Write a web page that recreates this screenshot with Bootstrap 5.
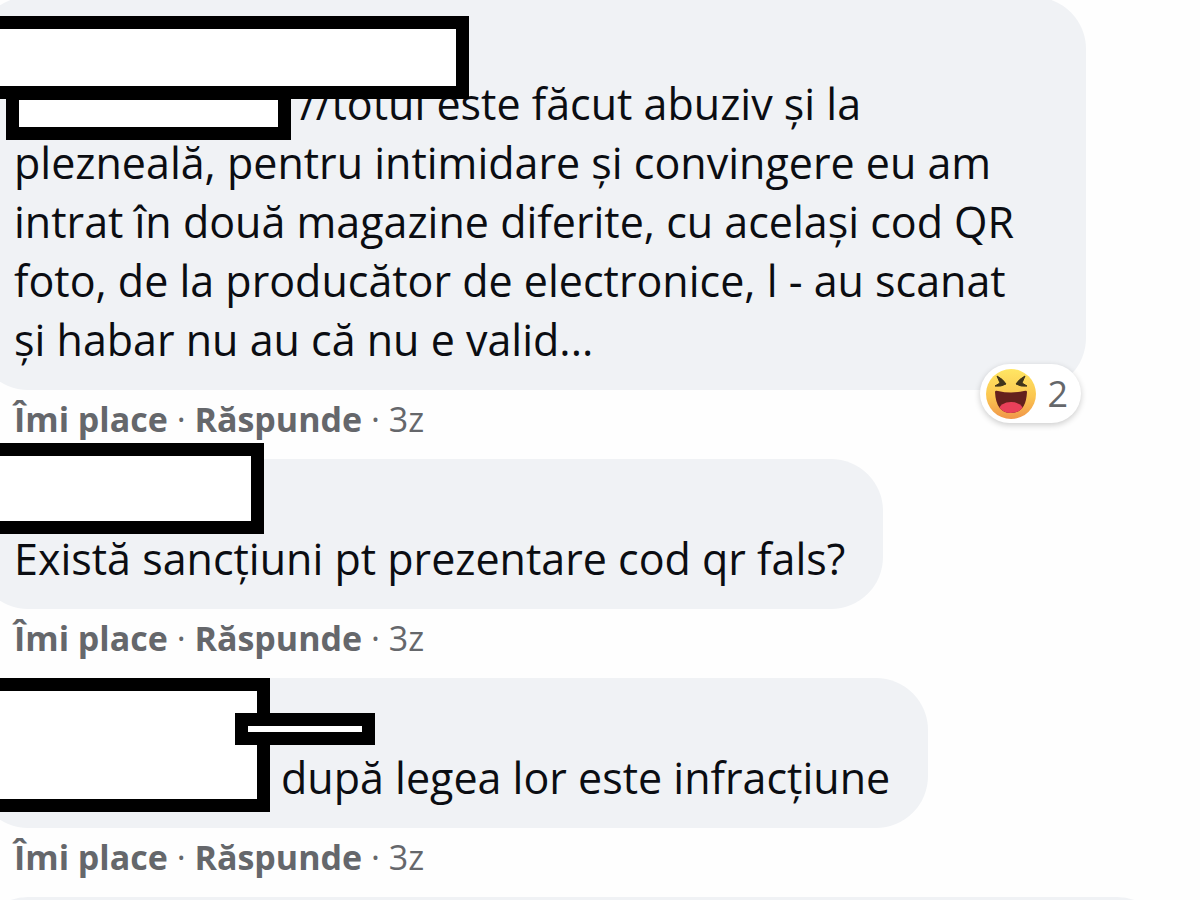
<!DOCTYPE html>
<html lang="ro">
<head>
<meta charset="utf-8">
<meta name="viewport" content="width=device-width, initial-scale=1">
<title>Comentarii</title>
<link href="https://cdn.jsdelivr.net/npm/bootstrap@5.3.0/dist/css/bootstrap.min.css" rel="stylesheet">
<style>
  body { font-family: "Open Sans", "Noto Sans", sans-serif; color: #0b0d12; background: #fefefe; }
  .thread { margin: -3px 0 0 -24px; }
  .bubble { background: #f0f2f5; border-radius: 52px; padding: 19px 38px 21px; width: fit-content; max-width: 100%; }
  .bubble-wide { padding-right: 72px; }
  .author { height: 51px; }
  .author-tall { height: 58px; }
  .message { font-size: 43px; line-height: 59px; white-space: nowrap; }
  .mention { display: inline-block; width: 286px; }
  .mention-short { width: 267px; }
  .actions { height: 69px; padding-left: 38px; font-size: 34px; line-height: 58px; color: #65676b; white-space: pre; }
  .actions button { font-weight: 700; color: #65676b; line-height: 58px; }
  .redact { position: absolute; left: 0; background: #fff; border: 13px solid #000; }
  .r-name1 { top: 19px; width: 493px; height: 83px; }
  .r-mention1 { top: 90px; left: 30px; width: 285px; height: 53px; }
  .r-name2 { top: -16px; width: 288px; height: 91px; }
  .r-name3 { top: 0; width: 294px; height: 134px; }
  .r-mention3 { top: 35px; left: 259px; width: 140px; height: 32px; }
  .reaction { position: absolute; right: 5px; bottom: -33px; height: 59px; padding: 0 13px 0 6px; gap: 12px;
    font-size: 36px; line-height: 59px; color: #65676b; background: #fff; box-shadow: 0 2px 6px rgba(0,0,0,.2); }
  .next { width: 1193px; height: 120px; }
</style>
</head>
<body class="vh-100 overflow-hidden">
<main class="thread">
  <article>
    <div class="bubble bubble-wide position-relative">
      <div class="author author-tall"></div>
      <p class="message m-0"><span class="mention"></span>//totul este făcut abuziv și la<br>plezneală, pentru intimidare și convingere eu am<br>intrat în două magazine diferite, cu același cod QR<br>foto, de la producător de electronice, l - au scanat<br>și habar nu au că nu e valid...</p>
      <span class="redact r-mention1"></span>
      <span class="redact r-name1"></span>
      <div class="reaction d-flex align-items-center rounded-pill">
        <svg width="50" height="50" viewBox="0 0 50 50" aria-hidden="true">
          <defs><linearGradient id="face" x1="0" y1="0" x2="0" y2="1"><stop offset="0" stop-color="#ffe663"/><stop offset=".55" stop-color="#fbc650"/><stop offset="1" stop-color="#f0964a"/></linearGradient>
          <clipPath id="mouth"><path d="M9 23Q9 21 12 22Q25 25 38 22Q41 21 41 23Q40 44 25 44Q10 44 9 23Z"/></clipPath></defs>
          <circle cx="25" cy="25" r="25" fill="url(#face)"/>
          <path d="M9 23Q9 21 12 22Q25 25 38 22Q41 21 41 23Q40 44 25 44Q10 44 9 23Z" fill="#64201d"/>
          <ellipse cx="25" cy="41" rx="12" ry="8" fill="#e9405a" clip-path="url(#mouth)"/>
          <path d="M11 7Q17 10 20 15Q15 18 9 17L14 14ZM39 7Q33 10 30 15Q35 18 41 17L36 14Z" fill="#40341b" stroke="#40341b" stroke-width="1" stroke-linejoin="round"/>
        </svg>
        <span>2</span>
      </div>
    </div>
    <div class="actions"><button type="button" class="border-0 bg-transparent p-0">Îmi place</button> · <button type="button" class="border-0 bg-transparent p-0">Răspunde</button> · 3z</div>
  </article>
  <article>
    <div class="bubble position-relative">
      <div class="author"></div>
      <p class="message m-0">Există sancțiuni pt prezentare cod qr fals?</p>
      <span class="redact r-name2"></span>
    </div>
    <div class="actions"><button type="button" class="border-0 bg-transparent p-0">Îmi place</button> · <button type="button" class="border-0 bg-transparent p-0">Răspunde</button> · 3z</div>
  </article>
  <article>
    <div class="bubble position-relative">
      <div class="author"></div>
      <p class="message m-0"><span class="mention mention-short"></span>după legea lor este infracțiune</p>
      <span class="redact r-name3"></span>
      <span class="redact r-mention3"></span>
    </div>
    <div class="actions"><button type="button" class="border-0 bg-transparent p-0">Îmi place</button> · <button type="button" class="border-0 bg-transparent p-0">Răspunde</button> · 3z</div>
  </article>
  <div class="bubble next"></div>
</main>
<script src="https://cdn.jsdelivr.net/npm/bootstrap@5.3.0/dist/js/bootstrap.bundle.min.js"></script>
</body>
</html>
